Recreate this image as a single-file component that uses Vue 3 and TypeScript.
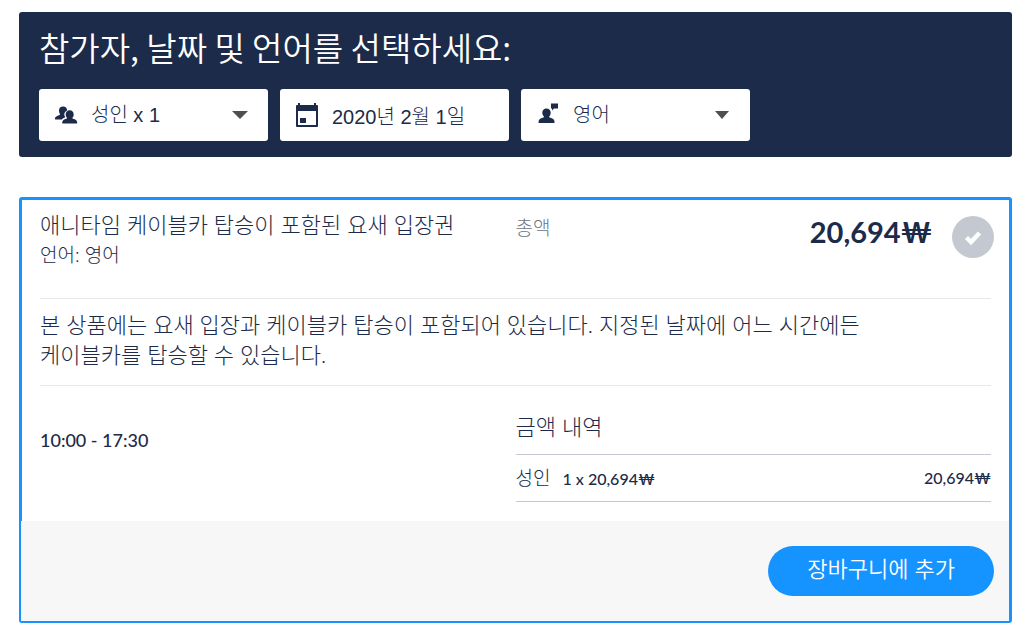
<script setup lang="ts">
import { ref } from 'vue'

const participants = ref('성인 x 1')
const date = ref('2020년 2월 1일')
const language = ref('영어')
const selected = ref(true)

const option = {
  title: '애니타임 케이블카 탑승이 포함된 요새 입장권',
  description:
    '본 상품에는 요새 입장과 케이블카 탑승이 포함되어 있습니다. 지정된 날짜에 어느 시간에든 케이블카를 탑승할 수 있습니다.',
  hours: '10:00 - 17:30',
  total: '20,694₩',
}
const rows = [{ label: '성인', quantity: '1 x 20,694₩', amount: '20,694₩' }]
</script>

<template>
  <main class="page">
    <section class="search">
      <h1>참가자, 날짜 및 언어를 선택하세요:</h1>
      <form class="fields" @submit.prevent>
        <div class="field">
          <svg class="icon" viewBox="0 0 24 24" aria-hidden="true">
            <g fill="#1b2b49">
              <path d="M9.2 3.5c2.4 0 3.9 1.6 3.9 3.9-1.9.7-2.9 2.3-2.8 4.4.1 1 .4 1.800.9 2.500-1.400.500-2.600 1.200-3.300 2.200H1.500c-.5 0-.7-.4-.6-.9.4-2 1.900-2.700 4.600-3.600.6-.2.7-.8.3-1.300C5.200 9.900 5 8.700 5 7.500c0-2.500 1.600-4 4.200-4z" />
              <path d="M15.700 7.300c2.500 0 4 1.700 4 4.100 0 1.200-.4 2.400-1.100 3.200-.4.500-.2 1 .4 1.200 2.600.8 4 1.600 4.200 3.600.1.600-.2 1-.8 1H9c-.6 0-.9-.4-.8-1 .3-2 1.700-2.800 4.200-3.600.6-.2.8-.7.4-1.200-.7-.8-1.100-2-1.100-3.200 0-2.400 1.500-4.100 4-4.100z" />
            </g>
          </svg>
          <select v-model="participants" aria-label="참가자">
            <option>성인 x 1</option>
          </select>
          <svg class="caret" viewBox="0 0 16 8" aria-hidden="true"><path d="M0 0h16L8 8z" fill="#4f4f4f" /></svg>
        </div>
        <div class="field">
          <svg class="icon" viewBox="0 0 24 24" aria-hidden="true">
            <path fill="#1b2b49" fill-rule="evenodd" d="M3 0h2v2h14V0h2v2h1q1 0 1 1v20q0 1-1 1H2q-1 0-1-1V3q0-1 1-1h1zM3 8v14h18V8zM5 15h6v5H5z" />
          </svg>
          <input v-model="date" type="text" aria-label="날짜" />
        </div>
        <div class="field">
          <svg class="icon" viewBox="0 0 24 24" aria-hidden="true">
            <g fill="#1b2b49">
              <path d="M10.500 5.500c2.600 0 4.200 1.700 4.200 4.200 0 1.400-.5 2.700-1.300 3.500-.5.600-.3 1.200.4 1.400 3 .9 4.600 1.900 4.800 4.400 0 .7-.3 1.100-1 1.100H3.400c-.7 0-1-.4-.9-1.100.2-2.500 1.800-3.500 4.800-4.400.7-.2.8-.8.4-1.400-.8-.8-1.400-2.100-1.400-3.500 0-2.500 1.600-4.200 4.200-4.200z" />
              <path d="M15 .5h7v5h-4L16 7.500v-2h-1z" />
            </g>
          </svg>
          <select v-model="language" aria-label="언어">
            <option>영어</option>
          </select>
          <svg class="caret" viewBox="0 0 16 8" aria-hidden="true"><path d="M1 0h14L8 8z" fill="#4f4f4f" /></svg>
        </div>
      </form>
    </section>

    <article class="card">
      <div class="body">
        <header class="summary">
          <div>
            <h2>{{ option.title }}</h2>
            <p class="language">언어: {{ language }}</p>
          </div>
          <div class="total">
            <span class="total-label">총액</span>
            <strong>{{ option.total }}</strong>
            <label class="tick">
              <input v-model="selected" type="checkbox" aria-label="옵션 선택" />
              <svg viewBox="0 0 18 16" aria-hidden="true">
                <path d="M2.500 8.500l4.500 4.500L15.500 4" fill="none" stroke="#fff" stroke-width="4.500" />
              </svg>
            </label>
          </div>
        </header>
        <div class="about">
          <p>{{ option.description }}</p>
        </div>
        <div class="details">
          <p class="hours">{{ option.hours }}</p>
          <table>
            <caption>금액 내역</caption>
            <tbody>
              <tr v-for="row in rows" :key="row.label">
                <th scope="row">{{ row.label }}<span>{{ row.quantity }}</span></th>
                <td>{{ row.amount }}</td>
              </tr>
            </tbody>
          </table>
        </div>
      </div>
      <footer class="actions">
        <button type="button">장바구니에 추가</button>
      </footer>
    </article>
  </main>
</template>

<style>
body {
  margin: 0;
  background: #fff;
}
</style>

<style scoped>
.page {
  padding: 12px 20px 19px 19px;
  color: #1b2b49;
  font-family: Lato, "Noto Sans CJK KR", sans-serif;
  font-size: 20px;
  font-weight: 300;
  line-height: 30px;
}
.page * {
  box-sizing: border-box;
}
h1, h2, p {
  margin: 0;
  font-weight: 300;
}
.search {
  padding: 16px 20px;
  border-radius: 3px;
  background: #1b2b49;
}
h1 {
  margin-bottom: 23px;
  color: #fff;
  font-family: "Noto Sans CJK KR", sans-serif;
  font-size: 33px;
  font-weight: 350;
  line-height: 38px;
}
.fields {
  display: flex;
  gap: 12px;
}
.field {
  display: grid;
  grid-template-columns: 53px 1fr 56px;
  align-items: center;
  width: 229px;
  height: 52px;
  border-radius: 3px;
  background: #fff;
}
.field > * {
  grid-row: 1;
}
.icon {
  grid-column: 1;
  justify-self: center;
  width: 24px;
  height: 24px;
  z-index: 1;
  pointer-events: none;
}
.caret {
  grid-column: 3;
  justify-self: center;
  width: 16px;
  height: 8px;
  z-index: 1;
  pointer-events: none;
}
.field select,
.field input {
  grid-column: 1 / -1;
  width: 100%;
  height: 100%;
  margin: 0;
  padding: 0 0 0 52px;
  border: 0;
  border-radius: 3px;
  background: transparent;
  color: inherit;
  font: inherit;
  font-family: "Liberation Sans", "Noto Sans CJK KR", sans-serif;
  appearance: none;
}
.card {
  margin-top: 40px;
  border: 3px solid #1593ff;
  border-bottom-width: 2px;
  border-radius: 3px;
}
.body {
  padding: 0 18px;
}
.summary,
.details {
  display: grid;
  grid-template-columns: 1fr 1fr;
}
.summary {
  padding: 10px 0 28px;
  border-bottom: 1px solid #e8e8e8;
}
h2,
.about {
  font-size: 22px;
}
.language {
  font-size: 19px;
}
.total {
  display: flex;
  align-items: flex-start;
  margin: 6px -3px 0 0;
}
.total-label {
  flex: 1;
  color: #6b7383;
  font-size: 19px;
  line-height: 24px;
}
.total strong {
  margin-right: 20px;
  font-size: 29px;
  font-weight: 700;
  line-height: 32px;
}
.tick {
  display: grid;
  place-items: center;
}
.tick > * {
  grid-area: 1 / 1;
}
.tick input {
  width: 42px;
  height: 42px;
  margin: 0;
  border-radius: 50%;
  background: #c4c8d0;
  appearance: none;
}
.tick svg {
  width: 18px;
  height: 16px;
  z-index: 1;
  pointer-events: none;
}
.about {
  padding: 11px 0 15px;
  border-bottom: 1px solid #e8e8e8;
}
.about p {
  max-width: 87%;
}
.details {
  padding: 26px 0 19px;
}
.hours {
  padding-top: 13px;
  font-size: 18px;
  font-weight: 500;
}
table {
  width: 100%;
  border-collapse: collapse;
}
caption {
  padding-bottom: 12px;
  font-size: 22px;
  text-align: left;
}
tr {
  border-top: 1px solid #c4c8d0;
  border-bottom: 1px solid #c4c8d0;
}
th,
td {
  height: 47px;
  padding: 0;
}
th {
  font-size: 19px;
  font-weight: 300;
  text-align: left;
}
th span {
  margin-left: 12px;
  font-size: 16px;
  font-weight: 500;
}
td {
  font-size: 16px;
  font-weight: 500;
  text-align: right;
}
.actions {
  display: flex;
  justify-content: flex-end;
  margin-left: -1px;
  padding: 25px 15px;
  background: #f7f7f7;
}
button {
  height: 50px;
  padding: 0 39px 4px;
  border: 0;
  border-radius: 25px;
  background: #1593ff;
  color: #fff;
  font: inherit;
  font-size: 22px;
  font-weight: 350;
}
</style>
